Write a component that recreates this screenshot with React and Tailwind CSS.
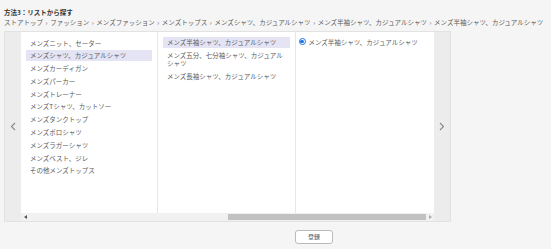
const firstCol = [
  "メンズニット、セーター",
  "メンズシャツ、カジュアルシャツ",
  "メンズカーディガン",
  "メンズパーカー",
  "メンズトレーナー",
  "メンズTシャツ、カットソー",
  "メンズタンクトップ",
  "メンズポロシャツ",
  "メンズラガーシャツ",
  "メンズベスト、ジレ",
  "その他メンズトップス",
];

const secondCol = [
  "メンズ半袖シャツ、カジュアルシャツ",
  "メンズ五分、七分袖シャツ、カジュアルシャツ",
  "メンズ長袖シャツ、カジュアルシャツ",
];

const crumbs = [
  "ストアトップ",
  "ファッション",
  "メンズファッション",
  "メンズトップス",
  "メンズシャツ、カジュアルシャツ",
  "メンズ半袖シャツ、カジュアルシャツ",
  "メンズ半袖シャツ、カジュアルシャツ",
];

function Chevron({ dir }) {
  return (
    <svg width="6" height="9" viewBox="0 0 6 9">
      <polyline
        points={dir === "left" ? "5,1 1.5,4.5 5,8" : "1,1 4.5,4.5 1,8"}
        fill="none"
        stroke="#888"
        strokeWidth="1.1"
      />
    </svg>
  );
}

function Item({ label, active }) {
  return (
    <div
      className={
        "px-[4px] py-[1.5px] leading-[8px] " + (active ? "bg-[#e4e4f4]" : "")
      }
    >
      {label}
    </div>
  );
}

export default function App() {
  return (
    <div
      className="w-[551px] h-[249px] bg-[#f5f5f5] text-[6.5px] text-[#5a5a5a] overflow-hidden"
      style={{ fontFamily: '"Noto Sans CJK JP", "Noto Sans", sans-serif' }}
    >
      <div className="px-[4px] pt-[8px]">
        <div className="font-bold text-[#333] leading-[9px]">方法3：リストから探す</div>
        <div className="leading-[9px] mt-[0.5px] whitespace-nowrap">
          {crumbs.map((c, i) => (
            <span key={i}>
              {i > 0 && <span className="mx-[2.6px]">›</span>}
              {c}
            </span>
          ))}
        </div>
      </div>

      <div className="ml-[4px] mt-[4.5px] w-[447px] h-[191px] flex border border-[#e2e2e2] bg-[#ececec]">
        <div className="w-[16px] flex items-center justify-center">
          <Chevron dir="left" />
        </div>

        <div className="flex flex-col w-[413px]">
          <div className="flex flex-1 bg-white">
            <div className="w-[137px] border-r border-[#e6e6e6] px-[5px] pt-[5px] flex flex-col gap-[1.8px]">
              {firstCol.map((c, i) => (
                <Item key={c} label={c} active={i === 1} />
              ))}
            </div>
            <div className="w-[138px] border-r border-[#e6e6e6] px-[5px] pt-[4.5px] flex flex-col gap-[2px]">
              {secondCol.map((c, i) => (
                <Item key={c} label={c} active={i === 0} />
              ))}
            </div>
            <div className="flex-1 pl-[2.5px] pt-[5.5px]">
              <label className="flex items-center gap-[3px] leading-[8px]">
                <span className="w-[7px] h-[7px] rounded-full border border-[#1a73e8] flex items-center justify-center">
                  <span className="w-[3.5px] h-[3.5px] rounded-full bg-[#1a73e8]" />
                </span>
                メンズ半袖シャツ、カジュアルシャツ
              </label>
            </div>
          </div>

          <div className="h-[8px] bg-[#f1f1f1] flex items-center">
            <span className="w-[8px] flex justify-center">
              <svg width="3" height="4" viewBox="0 0 3 4">
                <polygon points="3,0 0,2 3,4" fill="#555" />
              </svg>
            </span>
            <div className="ml-[199px] w-[198px] h-[6px] bg-[#c1c1c1]" />
            <span className="flex-1 flex justify-center">
              <svg width="3" height="4" viewBox="0 0 3 4">
                <polygon points="0,0 3,2 0,4" fill="#aaa" />
              </svg>
            </span>
          </div>
        </div>

        <div className="w-[16px] flex items-center justify-center">
          <Chevron dir="right" />
        </div>
      </div>

      <div className="pl-[295px] mt-[8px]">
        <button className="w-[38px] h-[14px] bg-white border border-[#bbb] rounded-[3px] text-[6px] text-[#555] leading-none">
          登録
        </button>
      </div>
    </div>
  );
}
